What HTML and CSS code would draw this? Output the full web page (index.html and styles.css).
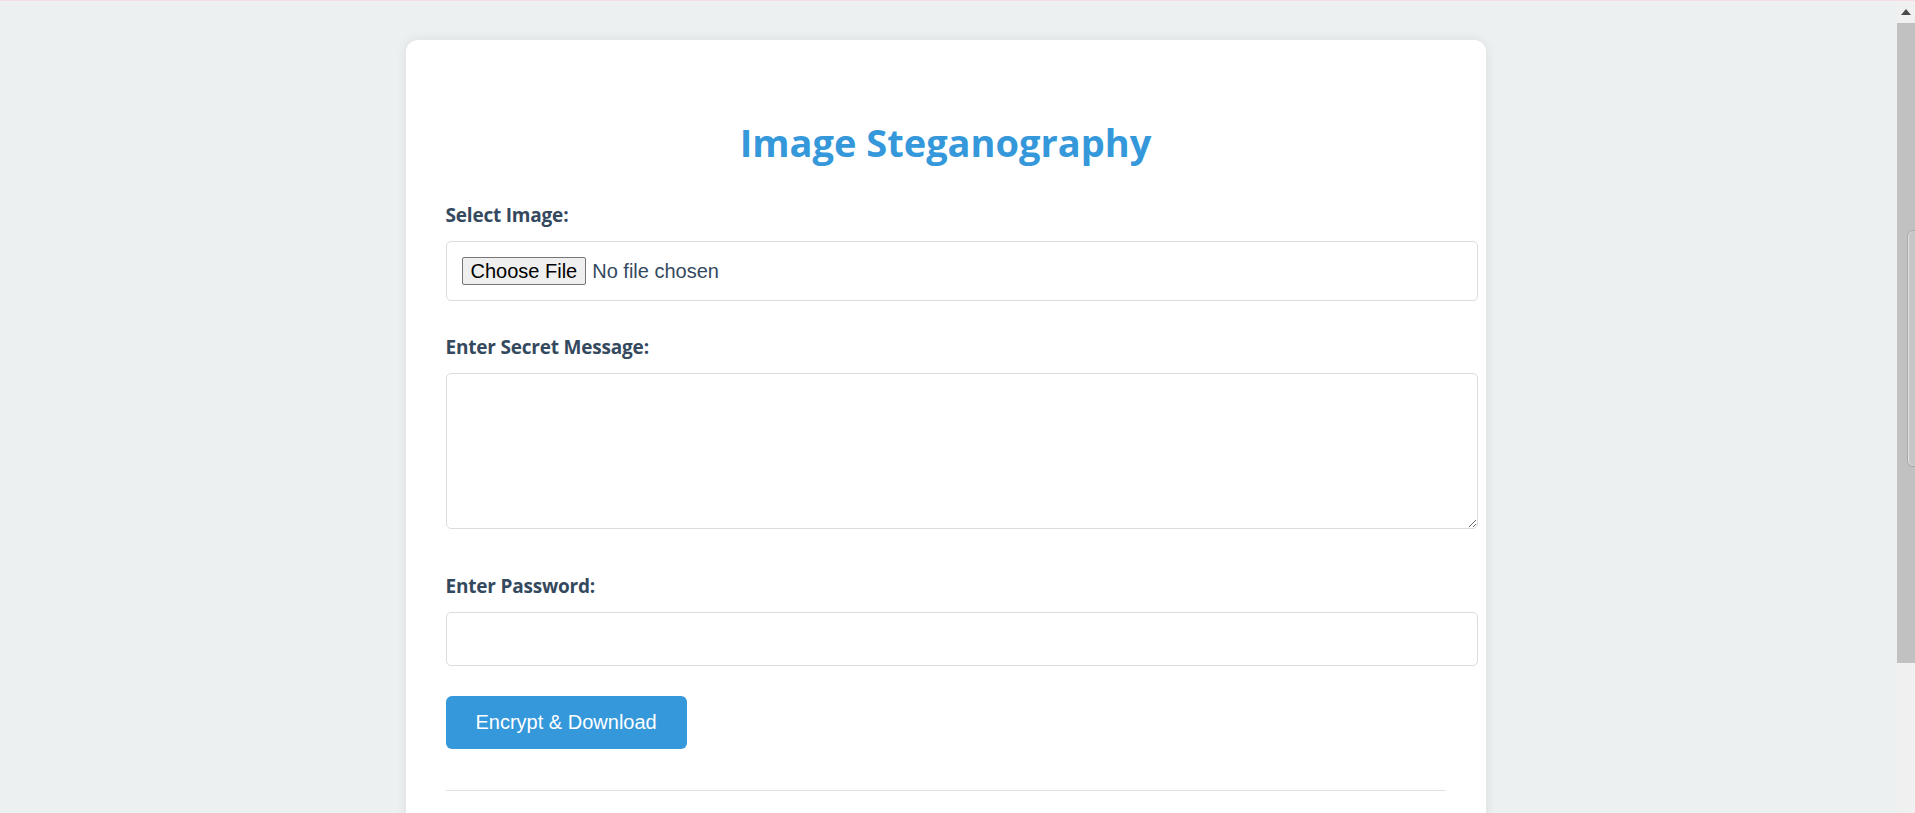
FILE: index.html
```html
<!DOCTYPE html>
<html lang="en">
<head>
<meta charset="utf-8">
<title>Image Steganography</title>
<link rel="stylesheet" href="styles.css">
</head>
<body>
<div class="page">
  <main class="viewport">
    <div class="container">
      <h1 class="title">Image Steganography</h1>

      <div class="field">
        <label class="label" for="img">Select Image:</label>
        <input class="file-input" id="img" type="file">
      </div>

      <div class="field field-message">
        <label class="label" for="msg">Enter Secret Message:</label>
        <textarea class="text-area" id="msg"></textarea>
      </div>

      <div class="field field-password">
        <label class="label" for="pwd">Enter Password:</label>
        <input class="text-input" id="pwd" type="password">
      </div>

      <button class="primary-btn" type="button">Encrypt &amp; Download</button>

      <div class="divider"></div>
      <div class="below-fold"></div>
    </div>
  </main>
  <div class="scrollbar">
    <div class="sb-arrow"><span class="sb-tri"></span></div>
    <div class="sb-thumb"></div>
    <div class="sb-track"></div>
    <div class="sb-tab"></div>
  </div>
</div>
</body>
</html>
```

FILE: styles.css
```css
* {
  box-sizing: content-box;
}

html, body {
  margin: 0;
  padding: 0;
  height: 100%;
  overflow: hidden;
}

body {
  background: #ecf0f1;
  font-family: "Open Sans", "Noto Sans", sans-serif;
  color: #34495e;
}

.page {
  display: flex;
  height: 812px;
  border-top: 1px solid #f5dfe3;
}

.viewport {
  flex: 1;
  display: flex;
  justify-content: center;
  align-items: flex-start;
  padding-right: 6px;
  overflow: hidden;
}

.container {
  width: 1000px;
  margin-top: 39px;
  padding: 40px;
  background: #ffffff;
  border-radius: 12px;
  box-shadow: 0 0 12px rgba(0, 0, 0, 0.08);
  display: flex;
  flex-direction: column;
  align-items: flex-start;
  flex-shrink: 0;
}

.title {
  align-self: stretch;
  margin: 36px 0 33px;
  font-size: 38px;
  line-height: 53px;
  font-weight: 700;
  color: #3498db;
  text-align: center;
  letter-spacing: 0;
}

.field {
  display: flex;
  flex-direction: column;
  align-items: flex-start;
  align-self: stretch;
  margin-bottom: 33px;
}

.field-message {
  margin-bottom: 44px;
}

.field-password {
  margin-bottom: 30px;
}

.label {
  display: block;
  font-size: 19px;
  line-height: 27px;
  font-weight: 700;
  color: #34495e;
  margin-bottom: 12px;
  letter-spacing: -0.2px;
}

.file-input,
.text-input,
.text-area {
  display: block;
  width: 1000px;
  padding: 15px;
  border: 1px solid #dcdcdc;
  border-radius: 5px;
  background: #fff;
  color: #34495e;
  font-family: "Liberation Sans", Arial, sans-serif;
  font-size: 20px;
  margin: 0;
}

.file-input {
  height: 28px;
}

.file-input::file-selector-button {
  font-family: "Liberation Sans", Arial, sans-serif;
  font-size: 20px;
  height: 28px;
  padding: 0 8px;
  margin-right: 6px;
  background: #efefef;
  color: #000;
  border: 1px solid #767676;
  border-radius: 2px;
}

.text-area {
  height: 124px;
  resize: vertical;
  font-family: "Liberation Mono", monospace;
}

.text-input {
  height: 22px;
}

.primary-btn {
  display: block;
  padding: 15px 30px;
  height: 23px;
  line-height: 23px;
  border: none;
  border-radius: 6px;
  background: #3498db;
  color: #ffffff;
  font-family: "Liberation Sans", Arial, sans-serif;
  font-size: 20px;
  margin: 0 0 41px;
}

.divider {
  align-self: stretch;
  height: 1px;
  background: #dfe3e6;
}

.below-fold {
  height: 300px;
}

.scrollbar {
  position: relative;
  width: 18px;
  flex-shrink: 0;
  display: flex;
  flex-direction: column;
  background: #f0f0f0;
}

.sb-arrow {
  height: 22px;
  display: flex;
  align-items: center;
  justify-content: center;
  background: #f0f0f0;
}

.sb-tri {
  width: 0;
  height: 0;
  border-left: 5px solid transparent;
  border-right: 5px solid transparent;
  border-bottom: 6px solid #4a4a4a;
}

.sb-thumb {
  height: 640px;
  background: #c1c1c1;
}

.sb-track {
  flex: 1;
  background: #f0f0f0;
}

.sb-tab {
  position: absolute;
  left: 10px;
  top: 229px;
  width: 14px;
  height: 235px;
  border: 1px solid #a9a9a9;
  border-radius: 6px;
  background: #c6c6c6;
  box-shadow: inset 1px 0 1px rgba(255,255,255,0.5);
}
```
